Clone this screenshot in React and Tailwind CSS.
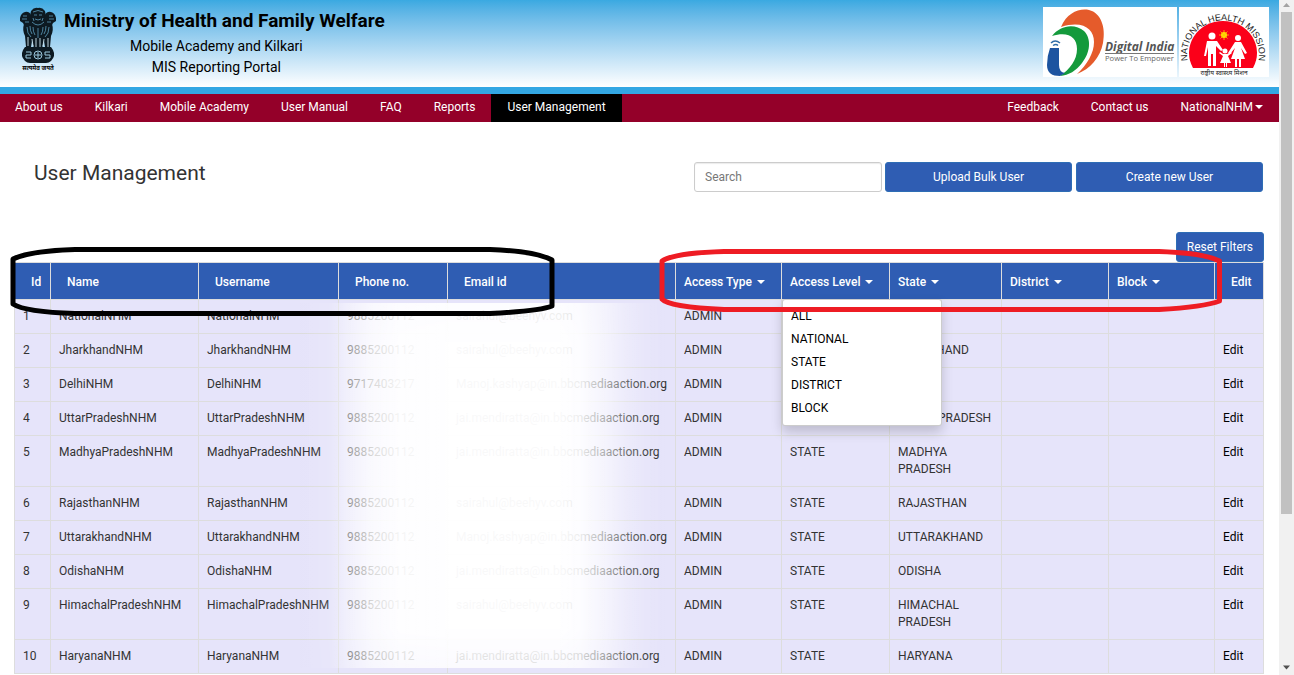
import React from "react";

const leftLinks = ["About us", "Kilkari", "Mobile Academy", "User Manual", "FAQ", "Reports", "User Management"];

const SAI = "sairahul@beehyv.com";
const JAI = "jai.mendiratta@in.bbcmediaaction.org";
const MANOJ = "Manoj.kashyap@in.bbcmediaaction.org";

const users = [
  ["1", "NationalNHM", "9885200112", SAI, "NATIONAL", ""],
  ["2", "JharkhandNHM", "9885200112", SAI, "STATE", "JHARKHAND"],
  ["3", "DelhiNHM", "9717403217", MANOJ, "STATE", "DELHI"],
  ["4", "UttarPradeshNHM", "9885200112", JAI, "STATE", "UTTAR PRADESH"],
  ["5", "MadhyaPradeshNHM", "9885200112", JAI, "STATE", "MADHYA PRADESH"],
  ["6", "RajasthanNHM", "9885200112", SAI, "STATE", "RAJASTHAN"],
  ["7", "UttarakhandNHM", "9885200112", MANOJ, "STATE", "UTTARAKHAND"],
  ["8", "OdishaNHM", "9885200112", JAI, "STATE", "ODISHA"],
  ["9", "HimachalPradeshNHM", "9885200112", SAI, "STATE", "HIMACHAL PRADESH"],
  ["10", "HaryanaNHM", "9885200112", JAI, "STATE", "HARYANA"],
];

function Caret() {
  return (
    <svg width="8" height="4" viewBox="0 0 8 4" fill="currentColor" aria-hidden="true" className="shrink-0">
      <path d="M0 0h8L4 4z" />
    </svg>
  );
}

function Emblem() {
  return (
    <svg viewBox="0 0 38 56" className="h-14 w-[38px]" aria-hidden="true">
      <g fill="#0d1a22">
        <path d="M12 4Q15 0 19 1Q23 0 26 4L27 9Q28 15 25 18L13 18Q10 15 11 9Z" />
        <path d="M1 11Q2 6 6 5Q10 4 12 8L13 12 12 20 6 20 4 16 1 14Z" />
        <path d="M37 11Q36 6 32 5Q28 4 26 8L25 12 26 20 32 20 34 16 37 14Z" />
        <path d="M5 17H33Q35 23 32 29L31 40H26L25 34 23 41H15L13 34 12 40H7L6 29Q3 23 5 17Z" />
        <path d="M6 40H32L34 43Q37 49 32 54Q30 56 27 56H11Q8 56 6 54Q1 49 4 43Z" />
      </g>
      <g fill="none" stroke="#5d9dbd" strokeWidth=".8">
        <path d="M14 5q5-3 10 0M15 8h3m2 0h3M16 12q3 2 6 0M13 15q6 6 12 0M14 11l1 3m9-3l-1 3" />
        <path d="M4 9h4m-5 3h5m26-3h-4m5 3h-5M6 15h4m18 0h4" />
        <path d="M8 20q0 7 4 10M30 20q0 7-4 10M14 20q0 5 2 8m3-7v10m5-11q0 5-2 8M11 19q0 5 2 8m14-8q0 5-2 8" />
      </g>
      <path d="M9 30v9m4-7l1 7m3-8v9m4-9v9m4-8l-1 7m5-8v9" fill="none" stroke="#cfe6f1" strokeWidth=".9" />
      <g fill="none" stroke="#9cc9de" strokeWidth="1">
        <circle cx="19" cy="48" r="4" />
        <path d="M19 45v6m-3-3h6M7 45h5v3H7v3h5m19-6h-5v3h5v3h-5" />
      </g>
    </svg>
  );
}

function DigitalIndia() {
  return (
    <svg viewBox="0 0 134 70" className="h-[70px] w-[134px]" role="img" aria-label="Digital India">
      <rect width="134" height="70" fill="#fff" />
      <path d="M18 20C24 6 36 1 46 3C58 6 63 20 60 36C57 51 47 62 34 67C44 58 51 46 51 35C51 22 40 13 18 20Z" fill="#e55b2b" />
      <path d="M9 29C17 18 32 16 41 24C49 32 47 46 39 56C33 64 26 68 17 69C27 62 34 53 34 42C34 30 25 24 9 29Z" fill="#149a3c" />
      <path d="M7 41h9v17q0 7 6 8l-5 3C9 69 4 66 4 58Q4 49 7 41Z" fill="#1d54a0" />
      <g fill="none" stroke="#2f6ca8" strokeWidth="1.500">
        <path d="M8 36q4-4 9 0M10 38.500q3-2 5 0" />
      </g>
      <text x="62" y="44" fontFamily="Open Sans, sans-serif" fontSize="12" fontWeight="700" fontStyle="italic" fill="#555">Digital India</text>
      <path d="M62 46.500h69" stroke="#777" />
      <text x="62" y="54" fontFamily="Open Sans, sans-serif" fontSize="7.600" fill="#666">Power To Empower</text>
    </svg>
  );
}

function HealthMission() {
  return (
    <svg viewBox="0 0 90 70" className="h-[70px] w-[90px]" role="img" aria-label="National Health Mission">
      <rect width="90" height="70" fill="#fff" />
      <path d="M14 61A34 32 0 1 1 74 61Z" fill="#fb0019" />
      <path id="nhm-arc" d="M12 63A36 34 0 1 1 76 63" fill="none" />
      <text fontFamily="Liberation Sans, sans-serif" fontSize="9" fill="#222">
        <textPath href="#nhm-arc" startOffset="50%" textAnchor="middle">NATIONAL HEALTH MISSION</textPath>
      </text>
      <circle cx="45" cy="28" r="3" fill="#ffe800" />
      <path d="M45 23v10m-5-5h10m-8.500-3.500l7 7m0-7l-7 7" stroke="#ffc800" strokeWidth=".8" />
      <g fill="#fff">
        <circle cx="33" cy="29" r="3.500" />
        <path d="M28 34h10l6 9-2 1-5-5v20h-3V47h-2v12h-3V40l-2 9h-2z" />
        <circle cx="59" cy="31" r="3" />
        <path d="M56 35h6l6 11-2 1-4-6 4 11h-4v8h-2v-8h-2v8h-2v-8h-4l4-11-5 6-2-1z" />
        <circle cx="46" cy="44" r="2.500" />
        <path d="M44 47h4l4-2 1 1-4 3 3 7h-4v4h-1v-4h-1v4h-1v-4h-4l3-7-4-3 1-1z" />
      </g>
      <text x="45" y="68" textAnchor="middle" fontFamily="Noto Sans, sans-serif" fontSize="6.500" fill="#222">राष्ट्रीय स्वास्थ्य मिशन</text>
    </svg>
  );
}

function Th({ children, filter, pad }) {
  return (
    <th scope="col" className={`border border-[#ddd] pt-[10px] pb-2 text-left font-medium ${pad || "px-4"}`}>
      {filter ? (
        <button type="button" className="flex items-center gap-[5px] whitespace-nowrap">
          {children}
          <Caret />
        </button>
      ) : (
        children
      )}
    </th>
  );
}

function UserTable() {
  const cell = "border border-[#ddd] px-2 py-2 align-top";
  return (
    <table className="w-full table-fixed border-collapse bg-[#e6e4fa] leading-[17px] text-[#333]">
      <colgroup>
        <col className="w-[36px]" />
        <col className="w-[148px]" />
        <col className="w-[140px]" />
        <col className="w-[109px]" />
        <col />
        <col className="w-[106px]" />
        <col className="w-[108px]" />
        <col className="w-[112px]" />
        <col className="w-[107px]" />
        <col className="w-[106px]" />
        <col className="w-[49px]" />
      </colgroup>
      <thead className="bg-[#2f5db3] leading-[18px] text-white">
        <tr>
          <Th>Id</Th>
          <Th>Name</Th>
          <Th>Username</Th>
          <Th>Phone no.</Th>
          <Th>Email id</Th>
          <Th filter pad="px-2">Access Type</Th>
          <Th filter pad="px-2">Access Level</Th>
          <Th filter pad="px-2">State</Th>
          <Th filter pad="px-2">District</Th>
          <Th filter pad="px-2">Block</Th>
          <Th>Edit</Th>
        </tr>
      </thead>
      <tbody>
        {users.map(([id, name, phone, email, level, state]) => (
          <tr key={id}>
            <td className={cell}>{id}</td>
            <td className={cell}>{name}</td>
            <td className={cell}>{name}</td>
            <td className={cell}>{phone}</td>
            <td className={cell}>{email}</td>
            <td className={cell}>ADMIN</td>
            <td className={cell}>{level}</td>
            <td className={cell}>{state}</td>
            <td className={cell}></td>
            <td className={cell}></td>
            <td className={`${cell} text-black`}>{id !== "1" && <a href="#edit">Edit</a>}</td>
          </tr>
        ))}
      </tbody>
    </table>
  );
}

export default function App() {
  return (
    <div className="flex min-h-screen bg-white font-['Roboto',sans-serif] text-[12px] text-[#333]">
      <div className="min-w-0 flex-1">
        <header className="flex items-start justify-between border-b-[7px] border-[#33a7e3] bg-linear-to-b from-[#3aa9e1] to-white pr-[10px] pl-[19px]">
          <div className="flex h-[87px] items-start gap-[7px] pt-[7px] text-black">
            <div className="flex flex-col items-center">
              <Emblem />
              <span className="font-['Noto_Sans',sans-serif] text-[6px] leading-[10px] font-bold">सत्यमेव जयते</span>
            </div>
            <div>
              <h1 className="text-[19px] leading-[28px] font-bold">Ministry of Health and Family Welfare</h1>
              <div className="pt-px pr-4 text-center text-[14px] leading-[21px]">
                <p>Mobile Academy and Kilkari</p>
                <p>MIS Reporting Portal</p>
              </div>
            </div>
          </div>
          <div className="flex gap-[2px] pt-[7px]">
            <DigitalIndia />
            <HealthMission />
          </div>
        </header>

        <nav className="flex h-7 justify-between bg-[#940029] leading-[26px] text-white">
          <div className="-ml-px flex">
            {leftLinks.map((l) => (
              <a key={l} href="#nav" className={`px-4 ${l === "User Management" ? "bg-black" : ""}`}>
                {l}
              </a>
            ))}
          </div>
          <div className="flex">
            <a href="#feedback" className="px-4">Feedback</a>
            <a href="#contact" className="px-4">Contact us</a>
            <button type="button" className="flex items-center gap-[2px] px-4 pb-[2px]">
              NationalNHM
              <Caret />
            </button>
          </div>
        </nav>

        <main className="pr-[15px] pl-[14px]">
          <div className="flex items-start justify-between pt-10 pr-px pl-5">
            <h2 className="text-[21px] leading-[22px] text-[#333]">User Management</h2>
            <div className="flex gap-1">
              <input
                type="text"
                aria-label="Search"
                placeholder="Search"
                className="-mr-px h-[30px] w-[188px] rounded-[3px] border border-[#ccc] px-[10px] shadow-[inset_0_1px_1px_rgba(0,0,0,0.08)] placeholder:text-[#777]"
              />
              <button type="button" className="h-[30px] w-[187px] rounded-[3px] border border-[#2e6db5] bg-[#2f5db3] text-white">
                Upload Bulk User
              </button>
              <button type="button" className="h-[30px] w-[187px] rounded-[3px] border border-[#2e6db5] bg-[#2f5db3] text-white">
                Create new User
              </button>
            </div>
          </div>

          <div className="flex justify-end pt-10">
            <button type="button" className="h-[30px] rounded-[3px] border border-[#2e6db5] bg-[#2f5db3] px-[10px] text-white">
              Reset Filters
            </button>
          </div>

          <div className="relative">
            <UserTable />

            <div className="pointer-events-none absolute top-[41px] bottom-[6px] left-[286px] w-[380px] bg-[linear-gradient(90deg,rgba(255,255,255,0)_0,rgba(255,255,255,.12)_30px,rgba(255,255,255,.5)_50px,rgba(255,255,255,.8)_72px,rgba(255,255,255,.95)_100px,rgba(255,255,255,.97)_150px,rgba(255,255,255,.97)_260px,rgba(255,255,255,.9)_280px,rgba(255,255,255,.6)_305px,rgba(255,255,255,.3)_325px,rgba(255,255,255,.1)_345px,rgba(255,255,255,0)_365px)] mask-[linear-gradient(180deg,rgba(0,0,0,.93)_0,#000_40px,#000_calc(100%-40px),rgba(0,0,0,.85)_100%)]" />

            <ul className="absolute top-[37px] left-[768px] w-40 rounded-[3px] border border-black/20 bg-white pt-1 pb-[6px] text-black shadow-[0_6px_12px_rgba(0,0,0,0.175)]">
              {["ALL", "NATIONAL", "STATE", "DISTRICT", "BLOCK"].map((o) => (
                <li key={o}>
                  <button type="button" className="block h-[23px] w-full px-2 text-left">{o}</button>
                </li>
              ))}
            </ul>

            <svg viewBox="0 0 546 70" className="pointer-events-none absolute top-[-16px] left-[-4px] h-[70px] w-[546px]" fill="none" stroke="#000" strokeWidth="5" aria-hidden="true">
              <path d="M3 13Q20 5 65 3.500H480Q525 5 542 14V60Q530 65 480 67.500H65Q15 66 3 58Z" strokeLinejoin="round" />
            </svg>
            <svg viewBox="0 0 564 64" className="pointer-events-none absolute top-[-14px] left-[645px] h-[64px] w-[564px]" fill="none" stroke="#ee1c24" strokeWidth="5" aria-hidden="true">
              <path d="M3 13Q15 5 65 3.500H500Q545 5 560.500 13V53Q545 59 500 61.500H65Q10 59 3 51Z" strokeLinejoin="round" />
            </svg>
          </div>
        </main>
      </div>

      <div className="flex w-[15px] shrink-0 flex-col items-center bg-[#f1f1f1]" aria-hidden="true">
        <svg width="15" height="12" viewBox="0 0 15 12" className="shrink-0">
          <path d="M4 7L7.500 3 11 7z" fill="#a3a3a3" />
        </svg>
        <div className="h-[502px] w-[11px] bg-[#c1c1c1]" />
        <svg width="15" height="15" viewBox="0 0 15 15" className="mt-auto shrink-0">
          <path d="M4 5.500h7L7.500 9.500z" fill="#505050" />
        </svg>
      </div>
    </div>
  );
}
